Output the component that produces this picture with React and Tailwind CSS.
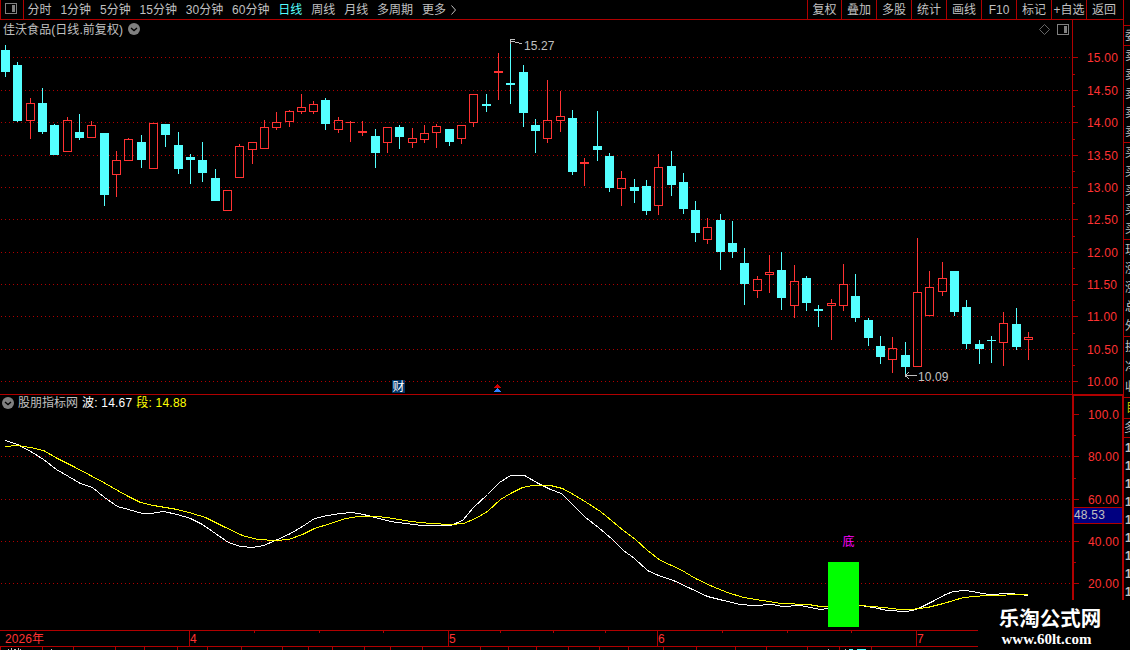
import React from 'react';
import clsx from 'clsx';

const periods = ['分时', '1分钟', '5分钟', '15分钟', '30分钟', '60分钟', '日线', '周线', '月线', '多周期', '更多'];
const tools = ['复权', '叠加', '多股', '统计', '画线', 'F10', '标记', '+自选', '返回'];

// [x, high, low, bodyTop, bodyBottom, up]
const candles = [
    [5, 45, 77, 50, 72, 0], [17, 62, 122, 65, 121, 0], [30, 98, 139, 103, 121, 1], [42, 88, 134, 103, 132, 0],
    [54, 124, 155, 125, 155, 0], [67, 117, 152, 120, 152, 1], [79, 114, 140, 132, 138, 0], [91, 121, 138, 125, 138, 1],
    [104, 133, 206, 133, 195, 0], [116, 151, 197, 160, 175, 1], [128, 138, 161, 139, 161, 1], [141, 135, 168, 142, 160, 0],
    [153, 123, 169, 123, 169, 1], [165, 124, 147, 124, 135, 0], [178, 132, 174, 145, 169, 0], [190, 154, 184, 157, 160, 0],
    [202, 142, 182, 160, 173, 0], [215, 169, 201, 178, 201, 0], [227, 190, 211, 190, 211, 1], [239, 144, 178, 146, 178, 1],
    [252, 142, 164, 142, 150, 1], [264, 120, 149, 127, 149, 1], [276, 112, 130, 122, 128, 1], [289, 110, 127, 111, 122, 1],
    [301, 94, 114, 107, 112, 1], [313, 101, 114, 104, 112, 1], [325, 98, 130, 100, 124, 0], [338, 117, 133, 120, 130, 1],
    [350, 121, 142, 122, 123, 1], [362, 121, 136, 131, 133, 1], [375, 129, 168, 136, 153, 0], [387, 127, 153, 127, 143, 1],
    [399, 125, 149, 127, 137, 0], [412, 128, 148, 138, 143, 1], [424, 125, 143, 133, 140, 1], [436, 124, 148, 126, 133, 1],
    [449, 129, 146, 129, 142, 0], [461, 125, 144, 125, 139, 1], [473, 94, 127, 94, 123, 1], [486, 94, 112, 104, 106, 0],
    [498, 53, 100, 71, 73, 1], [510, 40, 104, 83, 85, 0], [523, 65, 127, 72, 113, 0], [535, 119, 153, 125, 131, 0],
    [547, 80, 143, 120, 139, 1], [560, 91, 132, 116, 121, 1], [572, 110, 175, 118, 172, 0], [584, 158, 186, 162, 164, 1],
    [597, 111, 161, 146, 150, 0], [609, 153, 192, 156, 188, 0], [621, 171, 206, 178, 189, 1], [634, 179, 203, 187, 191, 0],
    [646, 180, 215, 186, 211, 0], [658, 154, 215, 167, 206, 1], [671, 151, 196, 166, 185, 0], [683, 173, 214, 182, 209, 0],
    [695, 201, 242, 210, 233, 0], [707, 218, 244, 227, 240, 1], [720, 214, 270, 220, 252, 0], [732, 221, 258, 243, 252, 0],
    [744, 248, 305, 263, 284, 0], [757, 276, 298, 279, 291, 1], [769, 255, 293, 272, 275, 1], [781, 252, 310, 270, 298, 0],
    [794, 265, 318, 281, 306, 1], [806, 276, 311, 278, 303, 0], [818, 305, 327, 309, 311, 0], [831, 299, 340, 303, 306, 1],
    [843, 264, 311, 284, 306, 1], [855, 274, 322, 296, 318, 0], [868, 318, 346, 320, 338, 0], [880, 336, 364, 346, 357, 0],
    [892, 337, 373, 348, 360, 1], [905, 342, 376, 355, 367, 0], [917, 238, 367, 292, 367, 1], [929, 271, 316, 287, 316, 1],
    [942, 262, 296, 278, 292, 1], [954, 271, 316, 271, 312, 0], [966, 300, 349, 307, 344, 0], [979, 340, 364, 344, 349, 0],
    [991, 336, 363, 340, 341, 0], [1003, 312, 366, 323, 343, 1], [1016, 308, 350, 324, 347, 0], [1028, 332, 360, 337, 340, 1],
];

const waveLine = '5,440 17,444 21,446 32,452 43,459 56,469 68,476 80,483 92,487 104,497 117,506 128,509 142,513 150,513 163,511 177,514 190,518 202,524 215,533 228,542 240,546 252,547 263,545 275,540 290,533 302,526 314,518 327,515 340,513 352,512 363,514 375,517 390,521 405,523 422,525 450,525 462,520 473,507 487,494 499,482 510,475 524,475 538,483 550,489 561,493 573,505 585,517 598,527 612,539 623,550 634,558 647,570 658,575 673,580 690,588 707,596 723,600 740,604 753,605 772,604 782,606 800,605 820,609 827,608 860,605 873,607 887,610 905,611 912,610 920,607 932,601 945,594 953,591 965,590 977,592 988,594 1010,593 1028,595';
const trendLine = '5,446 17,445 30,447 43,450 57,458 73,466 90,475 105,483 117,490 128,496 140,502 153,505 177,509 192,513 205,517 223,526 242,535 257,539 275,540 288,539 302,534 314,528 330,523 345,518 358,516 378,516 393,518 410,521 430,523 450,524 463,523 475,518 487,511 500,499 510,493 522,487 532,485 550,485 562,488 573,494 586,502 600,511 623,530 635,539 647,550 660,560 680,569 695,578 712,586 727,592 743,597 762,600 780,603 808,604 820,606 860,605 883,607 900,609 910,609 927,607 943,603 963,597 985,595 1028,594';

const priceTicks = [57, 90, 122, 155, 187, 219, 252, 284, 316, 349, 381];
const prices = ['15.00', '14.50', '14.00', '13.50', '13.00', '12.50', '12.00', '11.50', '11.00', '10.50', '10.00'];
const priceMinor = [74, 106, 139, 171, 203, 236, 268, 300, 333, 365];

const subTicks = [414, 456, 499, 541, 583];
const subLabels = ['100.0', '80.00', '60.00', '40.00', '20.00'];
const subMinor = [435, 478, 562];

const dateTicks = [254, 319, 383, 500, 553, 605, 722, 787, 851];
const footTicks = [0, 42, 73, 115, 144, 177, 207, 241, 282, 308, 332, 364, 390, 422, 480, 508, 536, 568, 599, 628, 663, 696, 735, 766, 807, 839, 871];

// quote panel, cut off by the window edge
const quoteGroups = [
    { rows: ['委比'], box: 'h-5' },
    { rows: ['卖五', '卖四', '卖三', '卖二', '卖一'], box: 'h-[97px]' },
    { rows: ['买一', '买二', '买三', '买四', '买五'], box: 'h-[97px]' },
    { rows: ['现价', '涨跌', '涨幅', '总量', '外盘'], box: 'h-[97px]' },
    { rows: ['换手', '净资', '收益'], box: 'h-[61px]' },
];

const PanelIcon = ({ className }) => (
    <svg width="12" height="11" viewBox="0 0 12 11" className={className} shapeRendering="crispEdges">
        <rect x="0.5" y="0.5" width="11" height="10" rx="1" fill="none" stroke="#808080" />
        <rect x="7" y="2" width="3" height="7" fill="#808080" />
    </svg>
);

const CollapseIcon = () => (
    <svg width="12" height="12" viewBox="0 0 12 12">
        <circle cx="6" cy="6" r="6" fill="#808080" />
        <path d="M3 5 L6 7.6 L9 5" fill="none" stroke="#000" strokeWidth="1.3" />
    </svg>
);

const Candle = ({ data }) => {
    const [x, high, low, top, bottom, up] = data;
    const color = up ? '#ff3232' : '#54ffff';
    const hollow = up && bottom - top > 2;
    return (
        <g fill={color}>
            {high < top && <rect x={x} y={high} width="1" height={top - high} />}
            {low > bottom && <rect x={x} y={bottom} width="1" height={low - bottom} />}
            {hollow ? (
                <rect x={x - 3.5} y={top + 0.5} width="8" height={bottom - top - 1} fill="none" stroke={color} />
            ) : (
                <rect x={x - 4} y={top} width="9" height={bottom - top} />
            )}
        </g>
    );
};

const GridLine = ({ y }) => (
    <line x1="1" x2="1072" y1={y + 0.5} y2={y + 0.5} stroke="#b00000" strokeDasharray="1 3" />
);

const MainChart = () => (
    <svg width="1072" height="374" viewBox="0 20 1072 374" className="block" shapeRendering="crispEdges">
        {priceTicks.map((y) => <GridLine key={y} y={y} />)}
        {candles.map((c) => <Candle key={c[0]} data={c} />)}
        <path d="M510.5 44v-4.500h4M511 41.5h3l2 1h2l2 1h2" fill="none" stroke="#c0c0c0" />
        <path d="M905 375.5h12M905 375.5l4-3M905 375.5l4 3" fill="none" stroke="#c0c0c0" />
        <g fontSize="12" fill="#c0c0c0" shapeRendering="auto" letterSpacing="0.1">
            <text x="524" y="50">15.27</text>
            <text x="918" y="381">10.09</text>
        </g>
        <rect x="392" y="380" width="13" height="13" fill="#003366" />
        <text x="392.5" y="391" fontSize="12" fill="#fff">财</text>
        <path d="M494 388h7l-3.500-4z" fill="#d00000" />
        <path d="M494 392h7l-3.500-4z" fill="#3080ff" />
    </svg>
);

const SubChart = () => (
    <svg width="1072" height="235" viewBox="0 395 1072 235" className="block" shapeRendering="crispEdges">
        {subTicks.slice(1).map((y) => <GridLine key={y} y={y} />)}
        <g fill="none" transform="translate(0.5 0.5)">
            <polyline points={waveLine} stroke="#fff" />
            <polyline points={trendLine} stroke="#ffff00" />
        </g>
        <rect x="828" y="562" width="31" height="65" fill="#00ff00" />
        <text x="842.500" y="546" fontSize="12" fill="#ff00ff">底</text>
    </svg>
);

const Axis = ({ top, height, ticks, labels, minor }) => (
    <svg width="50" height={height} viewBox={`1073 ${top} 50 ${height}`} className="block">
        <g fill="#b00000" shapeRendering="crispEdges">
            {ticks.map((y) => <rect key={y} x="1073" y={y} width="5" height="1" />)}
            {minor.map((y) => <rect key={y} x="1073" y={y} width="2" height="1" />)}
        </g>
        {ticks.map((y, i) => (
            <text key={y} x="1087" y={y + 5} fontSize="12" letterSpacing="0.2" fill="#ff3232">{labels[i]}</text>
        ))}
    </svg>
);

const App = () => (
    <div className="relative flex h-[650px] w-[1130px] overflow-hidden bg-black font-['Liberation_Sans','Noto_Sans_CJK_SC',sans-serif] text-[12px] leading-none text-[#c0c0c0]">
        <div className="flex w-[1123px] shrink-0 flex-col">
            {/* Toolbar */}
            <header className="flex h-5 shrink-0 items-stretch border-b border-[#b00000]">
                <div className="flex w-6 items-center border-x border-[#b00000] pb-[2px] pl-1">
                    <PanelIcon />
                </div>
                <nav className="flex flex-1 items-center gap-[8.900px] whitespace-nowrap pl-[3.500px]">
                    {periods.map((p) => (
                        <span key={p} className={clsx(p === '日线' && 'text-[#54ffff]')}>{p}</span>
                    ))}
                    <svg width="5" height="10" viewBox="0 0 5 10" className="-ml-1">
                        <path d="M0.500 0.500 L4.500 5 L0.500 9.500" fill="none" stroke="#c0c0c0" />
                    </svg>
                </nav>
                <div className="flex w-[316px] whitespace-nowrap">
                    {tools.map((t) => (
                        <button key={t} type="button" className="flex w-[35px] shrink-0 items-center justify-center border-l border-[#b00000] first:w-[34px]">{t}</button>
                    ))}
                </div>
            </header>

            {/* Price chart */}
            <section className="flex h-[375px] shrink-0 border-b border-[#b00000]">
                <div className="relative w-[1072px]">
                    <MainChart />
                    <div className="absolute inset-x-0 top-[3px] flex h-3 items-center gap-[5px] pl-[3px]">
                        <span className="pt-px tracking-[0.06px]">佳沃食品(日线.前复权)</span>
                        <CollapseIcon />
                        <svg width="11" height="11" viewBox="0 0 11 11" className="ml-auto">
                            <path d="M5.500 0.500 L10.500 5.500 L5.500 10.500 L0.500 5.500Z" fill="none" stroke="#808080" strokeWidth="0.8" />
                        </svg>
                        <PanelIcon className="mr-[3px] ml-[2px]" />
                    </div>
                </div>
                <div className="w-[51px] border-l border-[#b00000]">
                    <Axis top={20} height={374} ticks={priceTicks} labels={prices} minor={priceMinor} />
                </div>
            </section>

            {/* Indicator chart */}
            <section className="flex h-[235px] shrink-0">
                <div className="relative w-[1072px]">
                    <SubChart />
                    <div className="absolute top-[2px] left-[2px] flex h-3 items-center gap-1">
                        <CollapseIcon />
                        <span>股朋指标网</span>
                        <span className="tracking-[0.2px] text-white">波: 14.67</span>
                        <span className="tracking-[0.2px] text-[#ffff00]">段: 14.88</span>
                    </div>
                </div>
                <div className="relative w-[51px] border-t border-r border-l-2 border-[#b00000]">
                    <Axis top={396} height={234} ticks={subTicks} labels={subLabels} minor={subMinor} />
                    <div className="absolute top-[111px] left-0 flex h-[17px] w-full items-center border-y border-[#b00000] bg-[#000080] pb-[2px] tracking-[0.2px]">48.53</div>
                </div>
            </section>

            {/* Date axis */}
            <footer className="h-5 shrink-0">
                <svg width="1123" height="20" viewBox="0 630 1123 20" className="block">
                    <g fill="#b00000" shapeRendering="crispEdges">
                        <rect x="0" y="630" width="978" height="1" />
                        <rect x="0" y="646" width="978" height="1" />
                        {[189, 448, 657, 916].map((x) => <rect key={x} x={x} y="630" width="1" height="16" />)}
                        {dateTicks.map((x) => <rect key={x} x={x} y="631" width="1" height="2" />)}
                        {footTicks.map((x) => <rect key={x} x={x} y="647" width="1" height="3" />)}
                    </g>
                    <g fontSize="12" fill="#ff3232">
                        <text x="5" y="643" letterSpacing="0.1">2026年</text>
                        <text x="190" y="643">4</text>
                        <text x="449" y="643">5</text>
                        <text x="658" y="643">6</text>
                        <text x="917" y="643">7</text>
                    </g>
                    <g shapeRendering="crispEdges" fill="#c0c0c0">
                        <path d="M8 649h1v1h-1zM11 648h1v2h-1zM14 649h2v1h-2zM18 648h1v2h-1zM20 649h1v1h-1zM51 649h1v1h-1zM828 649h1v1h-1zM845 649h1v1h-1z" />
                        <path d="M849 649h4v1h-4zM857 649h9v1h-9z" fill="#54ffff" />
                    </g>
                </svg>
            </footer>
        </div>

        {/* Quote panel */}
        <aside className="flex w-[7px] shrink-0 flex-col overflow-hidden border-l border-[#b00000] pt-[25px]">
            {quoteGroups.map((g) => (
                <div key={g.rows[0]} className={clsx('flex shrink-0 flex-col justify-around border-t border-[#b00000] pl-px whitespace-nowrap', g.box)}>
                    {g.rows.map((r) => <span key={r}>{r}</span>)}
                </div>
            ))}
            <div className="flex h-[21px] shrink-0 items-center border-t border-[#b00000] pl-[2px] whitespace-nowrap text-[#c0c000]">目</div>
            <div className="flex h-[19px] shrink-0 items-center border-t border-[#b00000] whitespace-nowrap">多</div>
            <div className="flex flex-col border-t border-[#b00000] pt-px pl-px font-bold leading-[18px]">
                {[0, 1, 2, 3, 4, 5, 6, 7, 8].map((n) => <span key={n}>1</span>)}
            </div>
        </aside>

        {/* Watermark */}
        <div className="absolute right-0 bottom-0 flex h-[50px] w-[152px] flex-col items-center bg-black pt-[9px] pr-[8px] font-bold text-white">
            <span className="text-[20.500px] leading-[20px]">乐淘公式网</span>
            <span className="mt-[3px] mr-[7px] font-['Liberation_Serif',serif] text-[15px] leading-[15px]">www.60lt.com</span>
        </div>
    </div>
);

export default App;
